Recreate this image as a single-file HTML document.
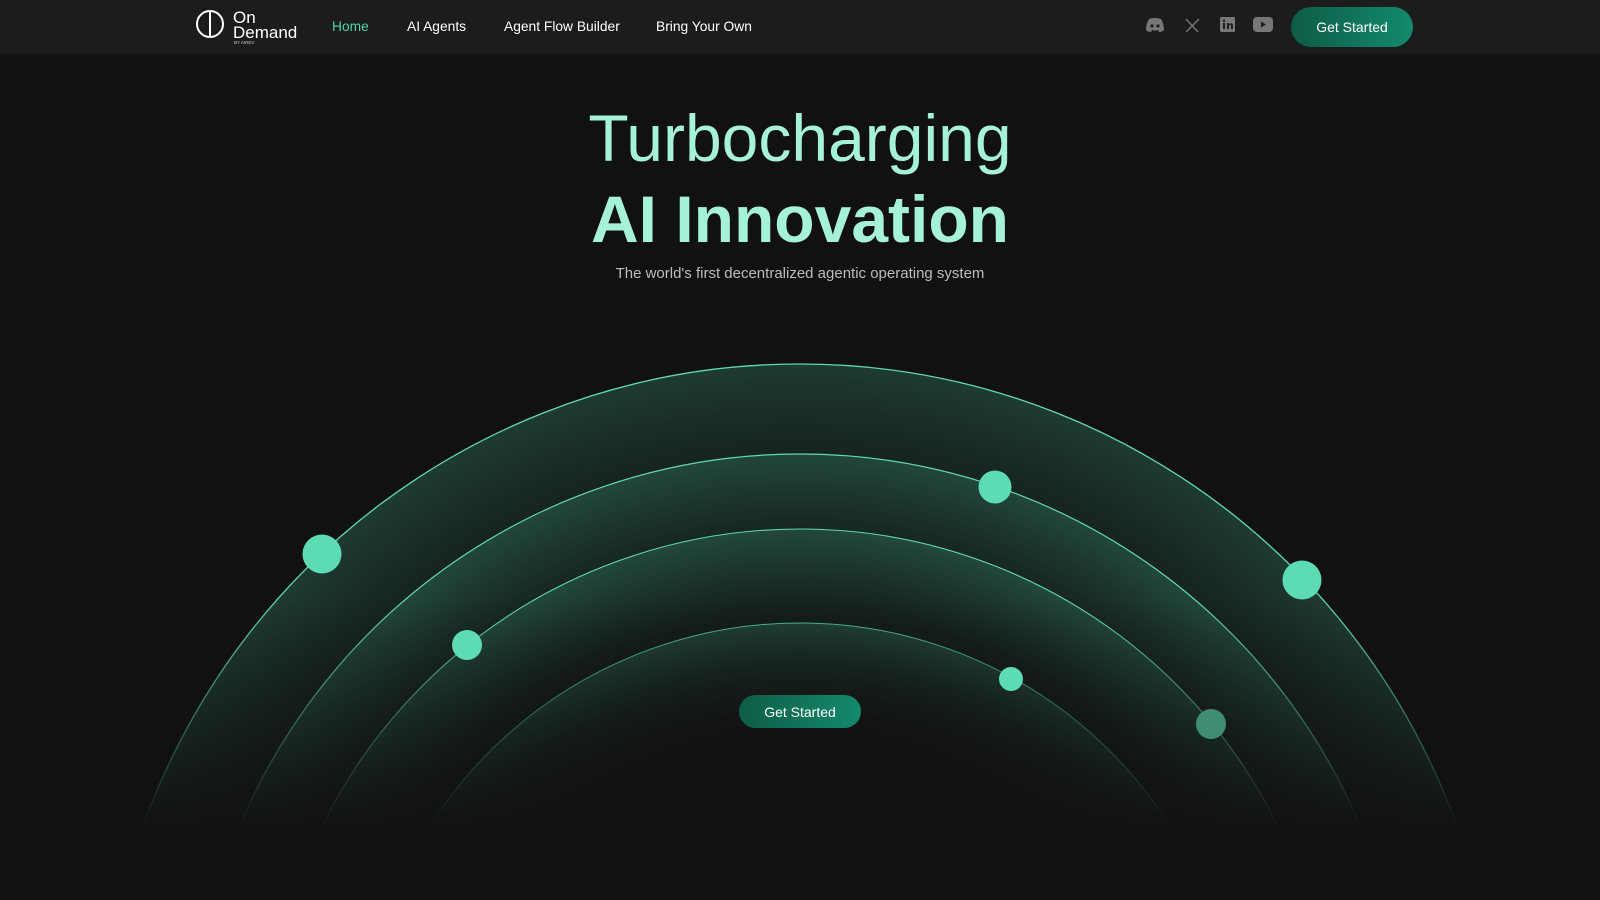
<!DOCTYPE html>
<html><head><meta charset="utf-8"><style>
*{margin:0;padding:0;box-sizing:border-box}
html,body{width:1600px;height:900px;overflow:hidden}
body{background:#111;font-family:"Liberation Sans",Arial,sans-serif;position:relative;color:#fff}
nav{position:absolute;left:0;top:0;width:1600px;height:54px;background:#1c1c1c}
.logo{position:absolute;left:196px;top:7px}
.nl{position:absolute;top:19px;font-size:13.8px;color:#fff}
.btn{position:absolute;background:linear-gradient(90deg,#0e5c47,#138a6c);color:#fff;border-radius:22px;display:flex;align-items:center;justify-content:center;font-size:14px}
h1{position:absolute;left:0;width:1600px;text-align:center;color:#a6f2d8;line-height:1}
.sub{position:absolute;top:265px;left:0;width:1600px;text-align:center;color:#bdbdbd;font-size:15px}
</style></head><body>
<nav>
<svg class="logo" width="120" height="40" viewBox="0 0 120 40">
<circle cx="14" cy="17" r="13" fill="none" stroke="#fff" stroke-width="2"/>
<line x1="14" y1="5" x2="14" y2="29" stroke="#fff" stroke-width="2"/>
<text x="37" y="16" fill="#fff" font-family="Liberation Sans" font-size="17">On</text>
<text x="37" y="31" fill="#fff" font-family="Liberation Sans" font-size="17">Demand</text>
<text x="38" y="37" fill="#ccc" font-family="Liberation Sans" font-size="4.5">BY AIREV</text>
</svg>
<span class="nl" style="left:332px;color:#4fd1aa">Home</span>
<span class="nl" style="left:407px">AI Agents</span>
<span class="nl" style="left:504px">Agent Flow Builder</span>
<span class="nl" style="left:656px">Bring Your Own</span>
<svg style="position:absolute;left:1145px;top:17px" width="20" height="16" viewBox="0 0 20 16"><path d="M4 2 Q10 0 16 2 Q19 7 19 13 Q17 15 14 15 L13 13 Q10 14 7 13 L6 15 Q3 15 1 13 Q1 7 4 2Z" fill="#777"/><circle cx="7" cy="9" r="1.6" fill="#1c1c1c"/><circle cx="13" cy="9" r="1.6" fill="#1c1c1c"/></svg>
<svg style="position:absolute;left:1185px;top:18px" width="15" height="15" viewBox="0 0 15 15"><path d="M1 1 L13 14 M14 1 L1 14" stroke="#777" stroke-width="1.4"/></svg>
<svg style="position:absolute;left:1220px;top:17px" width="15" height="15" viewBox="0 0 15 15"><rect width="15" height="15" rx="1.5" fill="#777"/><rect x="3" y="6" width="2" height="6" fill="#1c1c1c"/><circle cx="4" cy="3.7" r="1.2" fill="#1c1c1c"/><path d="M7 6 V12 H9 V8.5 Q10.5 7 11 8.5 V12 H13 V8 Q12 5 9 7 V6Z" fill="#1c1c1c"/></svg>
<svg style="position:absolute;left:1253px;top:17px" width="20" height="15" viewBox="0 0 20 15"><rect width="20" height="15" rx="4" fill="#777"/><path d="M8 4.5 L13 7.5 L8 10.5Z" fill="#1c1c1c"/></svg>
<div class="btn" style="left:1291px;top:7px;width:122px;height:40px">Get Started</div>
</nav>
<h1 style="top:105px;font-size:66px;font-weight:normal">Turbocharging</h1>
<h1 style="top:186px;font-size:66px;font-weight:bold">AI Innovation</h1>
<div class="sub">The world's first decentralized agentic operating system</div>
<svg style="position:absolute;left:0;top:0" width="1600" height="900">
<defs>
<radialGradient id="g" cx="0.5" cy="0.5" r="0.5">
<stop offset="0.75" stop-color="#2f7a60" stop-opacity="0"/>
<stop offset="1" stop-color="#3a9474" stop-opacity="0.32"/>
</radialGradient>
<linearGradient id="fade" x1="0" y1="0" x2="0" y2="1">
<stop offset="0" stop-color="#111" stop-opacity="0"/>
<stop offset="1" stop-color="#111" stop-opacity="1"/>
</linearGradient>
<clipPath id="c"><rect x="0" y="0" width="1600" height="830"/></clipPath>
</defs>
<g clip-path="url(#c)">
<circle cx="800" cy="1062" r="698" fill="url(#g)" stroke="#5fd9b3" stroke-width="1.3"/>
<circle cx="800" cy="1062" r="608" fill="url(#g)" stroke="#5fd9b3" stroke-width="1.2"/>
<circle cx="800" cy="1062" r="533" fill="url(#g)" stroke="#5fd9b3" stroke-width="1.1"/>
<circle cx="800" cy="1062" r="439" fill="url(#g)" stroke="#4cc09d" stroke-width="1"/>
<rect x="0" y="600" width="1600" height="232" fill="url(#fade)"/>
</g>
<circle cx="322" cy="554" r="19.5" fill="#5ddbb5"/>
<circle cx="995" cy="487" r="16.5" fill="#5ddbb5"/>
<circle cx="1302" cy="580" r="19.5" fill="#5ddbb5"/>
<circle cx="467" cy="645" r="15" fill="#5ddbb5"/>
<circle cx="1011" cy="679" r="12" fill="#5ddbb5"/>
<circle cx="1211" cy="724" r="15" fill="#3f8e73"/>
</svg>
<div class="btn" style="left:739px;top:695px;width:122px;height:33px">Get Started</div>
</body></html>
